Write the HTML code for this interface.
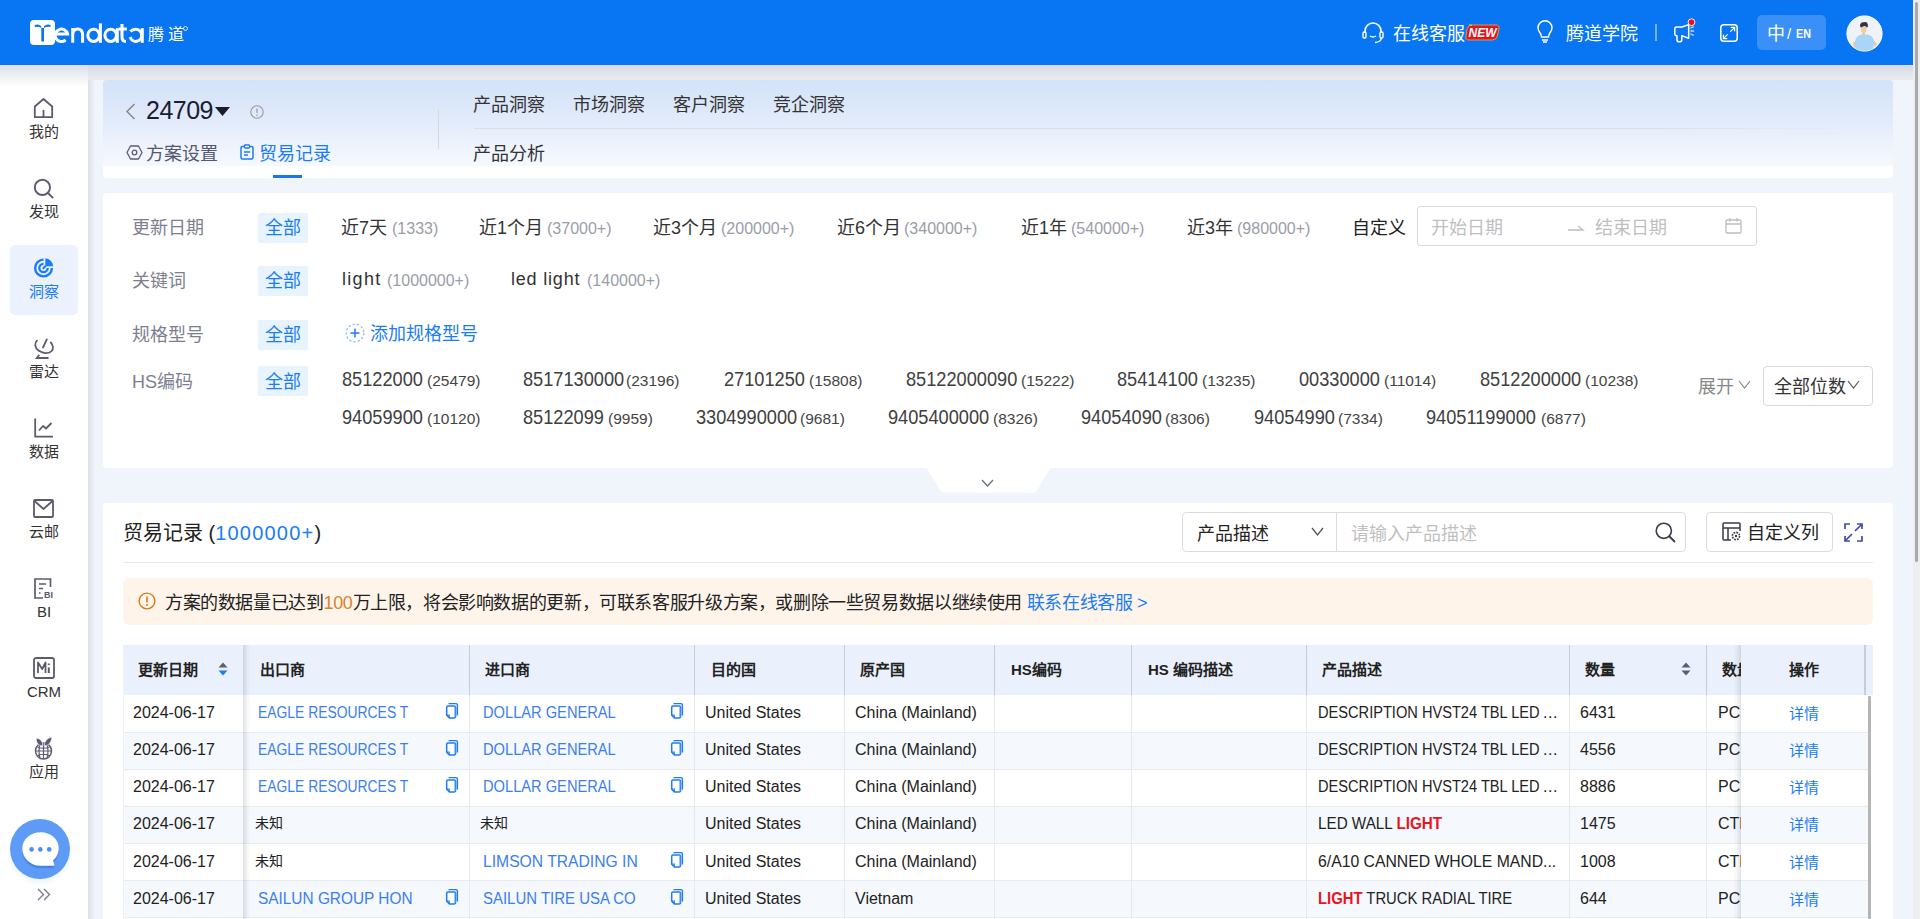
<!DOCTYPE html>
<html lang="zh-CN"><head><meta charset="utf-8">
<style>
*{margin:0;padding:0;box-sizing:border-box}
html,body{width:1920px;height:919px;overflow:hidden;background:#f0f4fb;font-family:"Liberation Sans",sans-serif;color:#333}
.a{position:absolute}
.t{position:absolute;white-space:nowrap;line-height:1}
.hdr{left:0;top:0;width:1913px;height:65px;background:#0876f2}
.sb{left:0;top:65px;width:88px;height:854px;background:#fff}
.card{position:absolute;background:#fff;border-radius:4px}
.w{color:#fff}
.sbl{font-size:15px;color:#333;width:88px;text-align:center;left:0}
svg{position:absolute;overflow:visible}
</style></head>
<body>
<!-- ===== HEADER ===== -->
<div class="a hdr"></div>
<!-- scrollbar -->
<div class="a" style="left:1913px;top:0;width:7px;height:919px;background:#eceef2"></div>
<div class="a" style="left:1915px;top:2px;width:3px;height:560px;background:#a9a9a9;border-radius:2px"></div>
<!-- logo -->
<div class="a" style="left:30px;top:20px;width:25px;height:25px;background:#fff;border-radius:4px"></div>
<svg style="left:30px;top:20px" width="25" height="25"><path d="M4.5 5.2 Q8.5 3.6 11.3 6.3 V21.5 H14 V6.3 Q16.8 3.6 20.8 5.2 L20.2 7 Q16.5 6.2 14 8 H11.3 Q8.8 6.2 5.1 7Z" fill="#0876f2"/></svg>
<svg style="left:0;top:0" width="200" height="60"><g fill="none" stroke="#fff" stroke-width="3">
<path d="M55.2 34 H67.6 A6.3 6.2 0 1 0 65.6 40"/>
<path d="M72.7 42.8 V28 M72.7 35 Q72.7 29 77.7 29 Q82.6 29 82.6 35 V42.8"/>
<ellipse cx="93.6" cy="35.3" rx="5.8" ry="6.1"/><path d="M100.4 23.4 V42.8"/>
<ellipse cx="110.7" cy="35.3" rx="5.8" ry="6.1"/><path d="M117.3 28.2 V42.8"/>
<path d="M122 24.1 V37 Q122 41.4 126 41.4"/><path d="M118.5 29 H126.8"/>
<path d="M130.4 31.5 Q132.5 29.2 135.8 29.2 A5.8 6.1 0 1 1 130.2 37"/><path d="M142.3 28.2 V42.8"/>
</g></svg>
<div class="t w" style="left:148px;top:27px;font-size:16px;letter-spacing:3.5px">腾道</div>
<div class="a" style="left:183px;top:26px;width:5px;height:5px;border:1px solid rgba(255,255,255,0.8);border-radius:50%"></div>

<!-- header right -->
<svg style="left:1362px;top:23px" width="22" height="20" viewBox="0 0 22 20"><path d="M3 10 V8 A8 8 0 0 1 19 8 V10" fill="none" stroke="#fff" stroke-width="1.6"/><rect x="1" y="9" width="3" height="6" rx="1.2" fill="none" stroke="#fff" stroke-width="1.4"/><rect x="18" y="9" width="3" height="6" rx="1.2" fill="none" stroke="#fff" stroke-width="1.4"/><path d="M8 13 Q11 15 14 13" fill="none" stroke="#fff" stroke-width="1.4"/><path d="M19.5 15 Q19 19 13 19.5" fill="none" stroke="#fff" stroke-width="1.4"/></svg>
<div class="t w" style="left:1393px;top:25px;font-size:18px">在线客服</div>
<svg style="left:1465px;top:24px" width="35" height="17" viewBox="0 0 35 17"><path d="M4 1 H31 Q35 1 34 5 L32 13 Q31 16 27 16 H4 Q0 16 1 12 L2 5 Q3 1 7 1Z" fill="#e3161c" stroke="#e8b04a" stroke-width="0.8"/><text x="17.5" y="13" font-family="Liberation Sans" font-size="12" font-weight="bold" font-style="italic" fill="#fff" text-anchor="middle">NEW</text></svg>
<svg style="left:1537px;top:23px" width="16" height="20" viewBox="0 0 16 20"><path d="M4.5 14 Q4.5 11.5 2.8 9.5 A7 7 0 1 1 13.2 9.5 Q11.5 11.5 11.5 14 Z" fill="none" stroke="#fff" stroke-width="1.5"/><path d="M5 17 H11 M6 19 H10" stroke="#fff" stroke-width="1.5"/></svg>
<div class="t w" style="left:1566px;top:25px;font-size:18px">腾道学院</div>
<div class="a" style="left:1655px;top:24px;width:2px;height:17px;background:rgba(255,255,255,0.45)"></div>
<svg style="left:1674px;top:18px" width="24" height="26" viewBox="0 0 24 26"><path d="M8 9 L14.7 6.6 V20.3 L8 17.7 H7.8 V22 Q7.8 23.8 5.4 23.8 Q3 23.8 3 22 V17.7 H2.6 Q0.8 17.7 0.8 15.5 V11.2 Q0.8 9 2.6 9 Z" fill="none" stroke="#fff" stroke-width="1.5" stroke-linejoin="round"/><path d="M16.8 10 L19.2 8.8 M17 13 H19.6 M16.8 16 L19.2 17.2" stroke="rgba(255,255,255,0.75)" stroke-width="1.3" stroke-linecap="round"/><circle cx="17.5" cy="4.2" r="3.4" fill="#e3101c" stroke="#fff" stroke-width="0.9"/></svg>
<svg style="left:1720px;top:24px" width="18" height="18" viewBox="0 0 18 18"><rect x="0.8" y="0.8" width="16.4" height="16.4" rx="3" fill="none" stroke="#fff" stroke-width="1.5"/><path d="M11.2 3.4 H14.6 V6.8 M14.4 3.6 L10.6 7.4 M3.4 11.2 V14.6 H6.8 M3.6 14.4 L7.4 10.6" fill="none" stroke="#fff" stroke-width="1.3" stroke-linecap="round"/></svg>
<div class="a" style="left:1757px;top:15px;width:69px;height:35px;background:#3a90f7;border-radius:5px"></div>
<div class="t w" style="left:1767px;top:25px;font-size:18px">中</div>
<div class="t w" style="left:1787px;top:26px;font-size:15px">/</div>
<div class="t w" style="left:1796px;top:28px;font-size:12.8px;font-weight:bold;transform:scaleX(0.84);transform-origin:0 0">EN</div>
<svg style="left:1846px;top:15px" width="37" height="37" viewBox="0 0 37 37"><defs><clipPath id="av"><circle cx="18.5" cy="18.5" r="17.3"/></clipPath></defs><circle cx="18.5" cy="18.5" r="17.6" fill="#eff2f9" stroke="#fff" stroke-width="1"/><g clip-path="url(#av)"><path d="M7.5 27 Q6.5 30 8 33 L10 32 L9.8 27Z M28.5 26 Q31 28 30.5 31 L28.5 31.5 L27.8 27Z" fill="#efc592"/><path d="M9.5 37 L9 26.5 Q10.5 20 15.5 19.5 H21.5 Q26.5 20 28.3 26.5 L26.5 37 Z" fill="#a9d6f6"/><rect x="16.3" y="16" width="2.6" height="4" fill="#efc592"/><ellipse cx="17.6" cy="14.2" rx="2.9" ry="3.4" fill="#f3cc9f"/><path d="M14 11 Q14 6.8 17.8 7.2 Q21.5 6.5 21.8 9.5 Q22.5 11.5 21 12.8 Q20 10.5 18 11 Q15.5 12 14.8 12.5Z" fill="#2f3446"/></g></svg>

<!-- ===== SIDEBAR ===== -->
<div class="a sb"></div>
<div class="a" style="left:88px;top:65px;width:7px;height:854px;background:linear-gradient(90deg,#dde1ea,#e8ebf1 60%,rgba(240,244,251,0))"></div>
<div class="a" style="left:10px;top:245px;width:68px;height:70px;background:#ebf1fd;border-radius:5px"></div>
<svg style="left:33px;top:97px" width="21" height="22" viewBox="0 0 21 22"><path d="M1.8 9.5 L10.5 2 L19.2 9.5 V20.2 H1.8 Z" fill="none" stroke="#5d5a70" stroke-width="1.8" stroke-linejoin="round"/><path d="M10.5 13 V20" stroke="#5d5a70" stroke-width="1.8"/></svg>
<div class="t sbl" style="top:124px">我的</div>
<svg style="left:33px;top:178px" width="22" height="22" viewBox="0 0 22 22"><circle cx="9.4" cy="9.4" r="7.6" fill="none" stroke="#5d5a70" stroke-width="1.9"/><path d="M15 15 L19.6 19.6" stroke="#5d5a70" stroke-width="1.9" stroke-linecap="round"/></svg>
<div class="t sbl" style="top:204px">发现</div>
<svg style="left:33px;top:257px" width="22" height="22" viewBox="0 0 22 22"><path d="M10.5 2.6 A8.4 8.4 0 1 0 18.9 11" fill="none" stroke="#1a7df5" stroke-width="2.4"/><path d="M10.5 6.8 A4.2 4.2 0 1 0 14.7 11" fill="none" stroke="#1a7df5" stroke-width="2.3"/><path d="M12.3 9.2 V1.3 A8.6 8.6 0 0 1 20.2 9.2 Z" fill="#1a7df5"/><path d="M9.8 11.7 L12.8 8.7" stroke="#1a7df5" stroke-width="2"/></svg>
<div class="t sbl" style="top:284px;color:#1a7df5">洞察</div>
<svg style="left:34px;top:337px" width="21" height="23" viewBox="0 0 21 23"><path d="M3 3.6 C0.2 6 0.6 10.8 4.5 13.6 C8.5 16.6 14 16.9 17.3 14.4 C19.8 12.4 19.3 8.2 16.8 5.4" fill="none" stroke="#5d5a70" stroke-width="1.8" stroke-linecap="round"/><path d="M9 10.5 L12.8 2.4" fill="none" stroke="#5d5a70" stroke-width="1.8" stroke-linecap="round"/><path d="M5.3 17.8 L2.8 21 H14.6" fill="none" stroke="#5d5a70" stroke-width="1.8"/></svg>
<div class="t sbl" style="top:364px">雷达</div>
<svg style="left:34px;top:418px" width="20" height="20" viewBox="0 0 20 20"><path d="M1.2 0.5 V18.6 H19" fill="none" stroke="#5d5a70" stroke-width="1.8"/><path d="M5 12.5 L9 8 L12 10.5 L17.5 5" fill="none" stroke="#5d5a70" stroke-width="1.8" stroke-linejoin="round"/></svg>
<div class="t sbl" style="top:444px">数据</div>
<svg style="left:33px;top:499px" width="21" height="19" viewBox="0 0 21 19"><rect x="1" y="1" width="19" height="17" rx="1" fill="none" stroke="#5d5a70" stroke-width="1.8"/><path d="M1.5 2 L10.5 10 L19.5 2" fill="none" stroke="#5d5a70" stroke-width="1.8"/></svg>
<div class="t sbl" style="top:524px">云邮</div>
<svg style="left:34px;top:578px" width="22" height="21" viewBox="0 0 22 21"><path d="M9 20 H1 V1 H16.5 V9" fill="none" stroke="#5d5a70" stroke-width="1.7"/><path d="M5 6 H12 M5 10.5 H9 M5 15 H6.5" stroke="#5d5a70" stroke-width="1.7"/><text x="10" y="20" font-family="Liberation Sans" font-size="9" font-weight="bold" fill="#5d5a70">BI</text></svg>
<div class="t sbl" style="top:604px">BI</div>
<svg style="left:33px;top:657px" width="22" height="22" viewBox="0 0 22 22"><rect x="1" y="1" width="20" height="20" rx="2" fill="none" stroke="#5d5a70" stroke-width="1.8"/><path d="M5 16 V5.5 L9.2 12 L12.5 5.5 V16" fill="none" stroke="#5d5a70" stroke-width="1.8" stroke-linejoin="round"/><path d="M15.8 10.5 V16 M15.8 6.5 V8" stroke="#5d5a70" stroke-width="2"/></svg>
<div class="t sbl" style="top:684px">CRM</div>
<svg style="left:32px;top:736px" width="23" height="24" viewBox="0 0 23 24"><circle cx="11.5" cy="15" r="8" fill="none" stroke="#5d5a70" stroke-width="1.5"/><path d="M3.5 15 H19.5 M11.5 8 V23 M5.5 11 Q11.5 13.5 17.5 11 M5.5 19.5 Q11.5 17 17.5 19.5 M8 8.5 Q6 15 8 22 M15 8.5 Q17 15 15 22" fill="none" stroke="#5d5a70" stroke-width="1.2"/><path d="M10.8 10 Q4 9.5 4.2 2 Q11 3 10.8 10Z M12.2 10 Q19 9.5 20 1 Q12.5 2.5 12.2 10Z" fill="#5d5a70" stroke="#fff" stroke-width="0.6"/></svg>
<div class="t sbl" style="top:764px">应用</div>
<div class="a" style="left:10px;top:819px;width:60px;height:60px;border-radius:50%;background:#5e9bf7;box-shadow:0 4px 5px rgba(94,155,247,0.10)"></div>
<svg style="left:20px;top:830px" width="42" height="42" viewBox="0 0 42 42"><path d="M20.5 4.8 C30.5 4.8 38.7 11.5 38.7 20.5 C38.7 26 36.5 30 33 33 L34.2 37.1 Q34.5 38.3 33 38.3 H20.5 C10.5 38.3 2.3 30.5 2.3 21 C2.3 12 10.5 4.8 20.5 4.8 Z" fill="#4386e8"/><path d="M20.5 2.3 C30.5 2.3 38.7 9 38.7 18 C38.7 23.5 36.5 27.5 33 30.5 L34.2 34.6 Q34.5 35.8 33 35.8 H20.5 C10.5 35.8 2.3 28 2.3 18.5 C2.3 9.5 10.5 2.3 20.5 2.3 Z" fill="#fff"/><circle cx="11.6" cy="19.4" r="2.3" fill="#4a8ff5"/><circle cx="20.3" cy="19.4" r="2.3" fill="#4a8ff5"/><circle cx="29.2" cy="19.4" r="2.3" fill="#4a8ff5"/></svg>
<svg style="left:37px;top:888px" width="14" height="13" viewBox="0 0 14 13"><path d="M1 1 L6.5 6.5 L1 12 M7 1 L12.5 6.5 L7 12" fill="none" stroke="#7b7d8e" stroke-width="1.4"/></svg>

<div class="a" style="left:88px;top:65px;width:1825px;height:15px;background:linear-gradient(#d7dbe4,#e9ebf0)"></div>
<div class="a" style="left:0;top:65px;width:88px;height:22px;background:linear-gradient(#dde1e9,rgba(255,255,255,0))"></div>
<!-- ===== TOP CARD ===== -->
<div class="card" style="left:103px;top:80px;width:1790px;height:98px;background:linear-gradient(180deg,#d3e3f9 0%,#dde8fa 30%,#e8effc 55%,#f0f4fd 72%,#f5f8fe 87%,#fff 88%,#fff 100%)"></div>
<svg style="left:125px;top:103px" width="11" height="17" viewBox="0 0 11 17"><path d="M9.5 1 L2 8.5 L9.5 16" fill="none" stroke="#888" stroke-width="1.5"/></svg>
<div class="t" style="left:146px;top:98px;font-size:25px;letter-spacing:-0.5px;color:#1c1c2e">24709</div>
<svg style="left:215px;top:107px" width="15" height="9" viewBox="0 0 15 9"><path d="M0 0 H15 L7.5 9Z" fill="#1c1c2e"/></svg>
<svg style="left:250px;top:105px" width="14" height="14" viewBox="0 0 14 14"><circle cx="7" cy="7" r="6.2" fill="none" stroke="#999" stroke-width="1.1"/><path d="M7 3.5 V8" stroke="#999" stroke-width="1.2"/><circle cx="7" cy="10.2" r="0.8" fill="#999"/></svg>
<svg style="left:126px;top:145px" width="17" height="15" viewBox="0 0 17 15"><path d="M4.5 1 H12.5 L16 7.5 L12.5 14 H4.5 L1 7.5Z" fill="none" stroke="#5a5d78" stroke-width="1.3" stroke-linejoin="round"/><circle cx="8.5" cy="7.5" r="2.3" fill="none" stroke="#5a5d78" stroke-width="1.3"/></svg>
<div class="t" style="left:146px;top:145px;font-size:18px;color:#555870">方案设置</div>
<svg style="left:240px;top:144px" width="14" height="16" viewBox="0 0 14 16"><rect x="1" y="2.5" width="12" height="12.5" rx="1.5" fill="none" stroke="#1a7df5" stroke-width="1.5"/><rect x="4.5" y="1" width="5" height="3" rx="0.8" fill="#fff" stroke="#1a7df5" stroke-width="1.3"/><path d="M4 8 H10 M4 11 H8" stroke="#1a7df5" stroke-width="1.4"/></svg>
<div class="t" style="left:259px;top:145px;font-size:18px;color:#1a7df5">贸易记录</div>
<div class="a" style="left:273px;top:175px;width:29px;height:3px;background:#1a73f0"></div>
<div class="a" style="left:438px;top:109px;width:1px;height:40px;background:#d4d8e2"></div>
<div class="t" style="left:473px;top:96px;font-size:18px;color:#333">产品洞察</div>
<div class="t" style="left:573px;top:96px;font-size:18px;color:#333">市场洞察</div>
<div class="t" style="left:673px;top:96px;font-size:18px;color:#333">客户洞察</div>
<div class="t" style="left:773px;top:96px;font-size:18px;color:#333">竞企洞察</div>
<div class="a" style="left:474px;top:128px;width:1390px;height:1px;background:linear-gradient(90deg,#dcdfe8 85%,rgba(220,223,232,0))"></div>
<div class="t" style="left:473px;top:145px;font-size:18px;color:#333">产品分析</div>

<!-- ===== FILTER CARD ===== -->
<div class="card" style="left:103px;top:193px;width:1790px;height:275px"></div>
<svg style="left:926px;top:467px" width="125" height="27" viewBox="0 0 125 27"><path d="M0 0 H125 L111 23 Q109 26 105 26 H20 Q16 26 14 23Z" fill="#fff"/></svg>
<svg style="left:981px;top:479px" width="13" height="8" viewBox="0 0 13 8"><path d="M1 1 L6.5 7 L12 1" fill="none" stroke="#6b6d80" stroke-width="1.3"/></svg>
<style>
.fl{font-size:18px;color:#7d7f90}
.allb{position:absolute;left:258px;width:50px;height:30px;background:#e8f4fd;border-radius:2px}
.allt{font-size:18px;color:#1a7df5}
.op{font-size:18px;color:#333}
.cn{font-size:16px;color:#9a9cab}
.hs{font-size:18.2px;color:#404040;transform:scaleY(1.08);transform-origin:0 0}
.hc{font-size:15.5px;color:#444}
</style>
<!-- row1 -->
<div class="t fl" style="left:132px;top:219px">更新日期</div>
<div class="allb" style="top:213px"></div><div class="t allt" style="left:265px;top:219px">全部</div>
<div class="t op" style="left:341px;top:219px">近7天</div><div class="t cn" style="left:392px;top:221px">(1333)</div>
<div class="t op" style="left:479px;top:219px">近1个月</div><div class="t cn" style="left:547px;top:221px">(37000+)</div>
<div class="t op" style="left:653px;top:219px">近3个月</div><div class="t cn" style="left:721px;top:221px">(200000+)</div>
<div class="t op" style="left:837px;top:219px">近6个月</div><div class="t cn" style="left:904px;top:221px">(340000+)</div>
<div class="t op" style="left:1021px;top:219px">近1年</div><div class="t cn" style="left:1071px;top:221px">(540000+)</div>
<div class="t op" style="left:1187px;top:219px">近3年</div><div class="t cn" style="left:1237px;top:221px">(980000+)</div>
<div class="t op" style="left:1352px;top:219px;color:#222">自定义</div>
<div class="a" style="left:1417px;top:206px;width:340px;height:40px;border:1px solid #d9d9d9;border-radius:3px;background:#fff"></div>
<div class="t" style="left:1431px;top:219px;font-size:18px;color:#bfbfbf">开始日期</div>
<svg style="left:1568px;top:224px" width="16" height="7" viewBox="0 0 16 7"><path d="M0 6 H15 L10 2" fill="none" stroke="#bfbfbf" stroke-width="1.3"/></svg>
<div class="t" style="left:1595px;top:219px;font-size:18px;color:#bfbfbf">结束日期</div>
<svg style="left:1725px;top:217px" width="17" height="17" viewBox="0 0 17 17"><rect x="1" y="3" width="15" height="13" rx="1" fill="none" stroke="#bfbfbf" stroke-width="1.3"/><path d="M1 7 H16 M5 1 V4.5 M12 1 V4.5" stroke="#bfbfbf" stroke-width="1.3"/></svg>
<!-- row2 -->
<div class="t fl" style="left:132px;top:272px">关键词</div>
<div class="allb" style="top:266px"></div><div class="t allt" style="left:265px;top:272px">全部</div>
<div class="t op" style="left:342px;top:270px;letter-spacing:1.3px">light</div><div class="t cn" style="left:387px;top:273px">(1000000+)</div>
<div class="t op" style="left:511px;top:270px;letter-spacing:0.8px">led light</div><div class="t cn" style="left:587px;top:273px">(140000+)</div>
<!-- row3 -->
<div class="t fl" style="left:132px;top:326px">规格型号</div>
<div class="allb" style="top:320px"></div><div class="t allt" style="left:265px;top:326px">全部</div>
<svg style="left:345px;top:323px" width="20" height="20" viewBox="0 0 20 20"><circle cx="10" cy="10" r="8.8" fill="none" stroke="#8fbdf7" stroke-width="1.2" stroke-dasharray="2.5 1.8"/><path d="M10 5.5 V14.5 M5.5 10 H14.5" stroke="#1a7df5" stroke-width="1.5"/></svg>
<div class="t" style="left:370px;top:325px;font-size:18px;color:#1a7df5">添加规格型号</div>
<!-- row4 HS -->
<div class="t fl" style="left:132px;top:373px">HS编码</div>
<div class="allb" style="top:366px"></div><div class="t allt" style="left:265px;top:373px">全部</div>
<div class="t hs" style="left:342px;top:370px">85122000</div><div class="t hc" style="left:427px;top:372.5px">(25479)</div>
<div class="t hs" style="left:523px;top:370px">8517130000</div><div class="t hc" style="left:626px;top:372.5px">(23196)</div>
<div class="t hs" style="left:724px;top:370px">27101250</div><div class="t hc" style="left:809px;top:372.5px">(15808)</div>
<div class="t hs" style="left:906px;top:370px">85122000090</div><div class="t hc" style="left:1021px;top:372.5px">(15222)</div>
<div class="t hs" style="left:1117px;top:370px">85414100</div><div class="t hc" style="left:1202px;top:372.5px">(13235)</div>
<div class="t hs" style="left:1299px;top:370px">00330000</div><div class="t hc" style="left:1384px;top:372.5px">(11014)</div>
<div class="t hs" style="left:1480px;top:370px">8512200000</div><div class="t hc" style="left:1585px;top:372.5px">(10238)</div>
<div class="t hs" style="left:342px;top:408px">94059900</div><div class="t hc" style="left:427px;top:410.5px">(10120)</div>
<div class="t hs" style="left:523px;top:408px">85122099</div><div class="t hc" style="left:608px;top:410.5px">(9959)</div>
<div class="t hs" style="left:696px;top:408px">3304990000</div><div class="t hc" style="left:800px;top:410.5px">(9681)</div>
<div class="t hs" style="left:888px;top:408px">9405400000</div><div class="t hc" style="left:993px;top:410.5px">(8326)</div>
<div class="t hs" style="left:1081px;top:408px">94054090</div><div class="t hc" style="left:1165px;top:410.5px">(8306)</div>
<div class="t hs" style="left:1254px;top:408px">94054990</div><div class="t hc" style="left:1338px;top:410.5px">(7334)</div>
<div class="t hs" style="left:1426px;top:408px">94051199000</div><div class="t hc" style="left:1541px;top:410.5px">(6877)</div>
<div class="t" style="left:1698px;top:378px;font-size:18px;color:#888">展开</div>
<svg style="left:1738px;top:380px" width="13" height="9" viewBox="0 0 13 9"><path d="M1 1 L6.5 8 L12 1" fill="none" stroke="#888" stroke-width="1.2"/></svg>
<div class="a" style="left:1763px;top:366px;width:110px;height:40px;border:1px solid #d9d9d9;border-radius:4px"></div>
<div class="t" style="left:1774px;top:378px;font-size:18px;color:#333">全部位数</div>
<svg style="left:1847px;top:380px" width="13" height="9" viewBox="0 0 13 9"><path d="M1 1 L6.5 8 L12 1" fill="none" stroke="#555" stroke-width="1.2"/></svg>
<!-- ===== RECORDS CARD ===== -->
<style>
.th{font-size:15px;font-weight:bold;color:#222}
.td{font-size:16px;color:#222}
.lk{font-size:16px;color:#3b7ef2}
.rl{position:absolute;left:123px;width:1750px;height:1px;background:#e8ebf0}
.cl{position:absolute;width:1px;background:#e6e9ef}
.hl{position:absolute;width:1px;top:645px;height:50px;background:#c9cdd6}
</style>
<div class="card" style="left:103px;top:503px;width:1790px;height:430px"></div>
<div class="t" style="left:123px;top:523px;font-size:20px;color:#222">贸易记录 (<span style="color:#1a7df5;letter-spacing:1.2px">1000000+</span>)</div>
<!-- search -->
<div class="a" style="left:1182px;top:512px;width:504px;height:40px;border:1px solid #d9dce3;border-radius:4px"></div>
<div class="a" style="left:1336px;top:513px;width:1px;height:38px;background:#d9dce3"></div>
<div class="t" style="left:1197px;top:525px;font-size:18px;color:#222">产品描述</div>
<svg style="left:1311px;top:527px" width="13" height="9" viewBox="0 0 13 9"><path d="M1 1 L6.5 8 L12 1" fill="none" stroke="#555" stroke-width="1.3"/></svg>
<div class="t" style="left:1351px;top:525px;font-size:18px;color:#bfbfbf">请输入产品描述</div>
<svg style="left:1655px;top:522px" width="21" height="21" viewBox="0 0 21 21"><circle cx="8.8" cy="8.8" r="7.6" fill="none" stroke="#3a3a4a" stroke-width="1.6"/><path d="M14.5 14.5 L19.5 19.5" stroke="#3a3a4a" stroke-width="1.8" stroke-linecap="round"/></svg>
<div class="a" style="left:1706px;top:512px;width:127px;height:40px;border:1px solid #d9dce5;border-radius:4px"></div>
<svg style="left:1722px;top:522px" width="20" height="20" viewBox="0 0 20 20"><path d="M9 18 H2 Q1 18 1 17 V2 Q1 1 2 1 H17 Q18 1 18 2 V9" fill="none" stroke="#3a3a4a" stroke-width="1.5"/><path d="M1 6 H18 M6 6 V18" stroke="#3a3a4a" stroke-width="1.5"/><circle cx="14" cy="14" r="3.6" fill="none" stroke="#3a3a4a" stroke-width="1.6" stroke-dasharray="1.8 1"/><circle cx="14" cy="14" r="1.2" fill="#3a3a4a"/></svg>
<div class="t" style="left:1747px;top:524px;font-size:18px;color:#222">自定义列</div>
<svg style="left:1844px;top:523px" width="19" height="19" viewBox="0 0 19 19"><path d="M1 6 V1 H6 M13 1 H18 V6 M18 13 V18 H13 M6 18 H1 V13 M11 8 L17 2 M8 11 L2 17" fill="none" stroke="#3d4f9e" stroke-width="1.7"/></svg>
<div class="a" style="left:123px;top:562px;width:1750px;height:1px;background:#e8e8e8"></div>
<!-- banner -->
<div class="a" style="left:123px;top:578px;width:1750px;height:47px;background:#fff4ea;border-radius:6px"></div>
<svg style="left:138px;top:592px" width="18" height="18" viewBox="0 0 18 18"><circle cx="9" cy="9" r="7.9" fill="none" stroke="#d87a16" stroke-width="1.4"/><path d="M9 4.5 V10.5" stroke="#d87a16" stroke-width="1.6"/><circle cx="9" cy="13" r="1" fill="#d87a16"/></svg>
<div class="t" style="left:165px;top:594px;font-size:18px;letter-spacing:-0.38px;color:#222">方案的数据量已达到<span style="color:#d9822b">100</span>万上限，将会影响数据的更新，可联系客服升级方案，或删除一些贸易数据以继续使用 <span style="color:#1a7df5">联系在线客服 &gt;</span></div>

<!-- TABLE -->
<div class="a" style="left:123px;top:645px;width:1750px;height:50.4px;background:#eaf1fc"></div>
<div class="a" style="left:123px;top:695.40px;width:1745px;height:37.16px;background:#fff"></div>
<div class="rl" style="top:731.56px;width:1745px"></div>
<div class="a" style="left:123px;top:732.56px;width:1745px;height:37.16px;background:#f5f8fd"></div>
<div class="rl" style="top:768.72px;width:1745px"></div>
<div class="a" style="left:123px;top:769.72px;width:1745px;height:37.16px;background:#fff"></div>
<div class="rl" style="top:805.88px;width:1745px"></div>
<div class="a" style="left:123px;top:806.88px;width:1745px;height:37.16px;background:#f5f8fd"></div>
<div class="rl" style="top:843.04px;width:1745px"></div>
<div class="a" style="left:123px;top:844.04px;width:1745px;height:37.16px;background:#fff"></div>
<div class="rl" style="top:880.20px;width:1745px"></div>
<div class="a" style="left:123px;top:881.20px;width:1745px;height:37.16px;background:#f5f8fd"></div>
<div class="rl" style="top:917.36px;width:1745px"></div>
<div class="cl" style="left:469px;top:694px;height:225px"></div>
<div class="hl" style="left:469px"></div>
<div class="cl" style="left:694px;top:694px;height:225px"></div>
<div class="hl" style="left:694px"></div>
<div class="cl" style="left:844px;top:694px;height:225px"></div>
<div class="hl" style="left:844px"></div>
<div class="cl" style="left:994px;top:694px;height:225px"></div>
<div class="hl" style="left:994px"></div>
<div class="cl" style="left:1131px;top:694px;height:225px"></div>
<div class="hl" style="left:1131px"></div>
<div class="cl" style="left:1306px;top:694px;height:225px"></div>
<div class="hl" style="left:1306px"></div>
<div class="cl" style="left:1569px;top:694px;height:225px"></div>
<div class="hl" style="left:1569px"></div>
<div class="cl" style="left:1706px;top:694px;height:225px"></div>
<div class="hl" style="left:1706px"></div>
<div class="cl" style="left:123px;top:694px;height:225px;background:#eef0f4"></div>
<div class="t th" style="left:138px;top:662px">更新日期</div>
<div class="t th" style="left:260px;top:662px">出口商</div>
<div class="t th" style="left:485px;top:662px">进口商</div>
<div class="t th" style="left:711px;top:662px">目的国</div>
<div class="t th" style="left:860px;top:662px">原产国</div>
<div class="t th" style="left:1011px;top:662px">HS编码</div>
<div class="t th" style="left:1148px;top:662px">HS 编码描述</div>
<div class="t th" style="left:1322px;top:662px">产品描述</div>
<div class="t th" style="left:1585px;top:662px">数量</div>
<div class="t th" style="left:1722px;top:662px">数量单位</div>
<svg style="left:218px;top:662px" width="10" height="15" viewBox="0 0 10 15"><path d="M0.5 5.5 L5 0.5 L9.5 5.5Z" fill="#5a5d73"/><path d="M0.5 8.5 L5 13.5 L9.5 8.5Z" fill="#1a7df5"/></svg>
<svg style="left:1681px;top:662px" width="10" height="15" viewBox="0 0 10 15"><path d="M0.5 5.5 L5 0.5 L9.5 5.5Z" fill="#5a5d73"/><path d="M0.5 8.5 L5 13.5 L9.5 8.5Z" fill="#5a5d73"/></svg>
<div class="t td" style="left:133px;top:705.00px">2024-06-17</div>
<div class="t lk" style="left:258px;top:705.00px;transform:scaleX(0.868);transform-origin:0 0">EAGLE RESOURCES T</div>
<svg style="left:445px;top:702px" width="14" height="17" viewBox="0 0 14 17"><path d="M3.6 1.6 H11 Q12.4 1.6 12.4 3 V13.4" fill="none" stroke="#1d7cf4" stroke-width="1.4"/><path d="M1.7 5.2 Q1.7 3.9 3 3.9 H9.3 Q10.6 3.9 10.6 5.2 V14.6 Q10.6 15.9 9.3 15.9 H4.4 L1.7 13.2 Z" fill="#fff" stroke="#1d7cf4" stroke-width="1.5" stroke-linejoin="round"/><path d="M9.8 4.5 V15" stroke="#7fb3f8" stroke-width="1"/><path d="M1.8 13 H4.2 V15.6" fill="none" stroke="#1d7cf4" stroke-width="1.2"/></svg>
<div class="t lk" style="left:483px;top:705.00px;transform:scaleX(0.916);transform-origin:0 0">DOLLAR GENERAL</div>
<svg style="left:670px;top:702px" width="14" height="17" viewBox="0 0 14 17"><path d="M3.6 1.6 H11 Q12.4 1.6 12.4 3 V13.4" fill="none" stroke="#1d7cf4" stroke-width="1.4"/><path d="M1.7 5.2 Q1.7 3.9 3 3.9 H9.3 Q10.6 3.9 10.6 5.2 V14.6 Q10.6 15.9 9.3 15.9 H4.4 L1.7 13.2 Z" fill="#fff" stroke="#1d7cf4" stroke-width="1.5" stroke-linejoin="round"/><path d="M9.8 4.5 V15" stroke="#7fb3f8" stroke-width="1"/><path d="M1.8 13 H4.2 V15.6" fill="none" stroke="#1d7cf4" stroke-width="1.2"/></svg>
<div class="t td" style="left:705px;top:705.00px">United States</div>
<div class="t td" style="left:855px;top:705.00px">China (Mainland)</div>
<div class="t td" style="left:1318px;top:705.00px;transform:scaleX(0.913);transform-origin:0 0">DESCRIPTION HVST24 TBL LED</div>
<div class="t td" style="left:1543px;top:705.00px;letter-spacing:0.6px">...</div>
<div class="t td" style="left:1580px;top:705.00px">6431</div>
<div class="t td" style="left:1718px;top:705.00px">PCS</div>
<div class="t td" style="left:133px;top:742.16px">2024-06-17</div>
<div class="t lk" style="left:258px;top:742.16px;transform:scaleX(0.868);transform-origin:0 0">EAGLE RESOURCES T</div>
<svg style="left:445px;top:739px" width="14" height="17" viewBox="0 0 14 17"><path d="M3.6 1.6 H11 Q12.4 1.6 12.4 3 V13.4" fill="none" stroke="#1d7cf4" stroke-width="1.4"/><path d="M1.7 5.2 Q1.7 3.9 3 3.9 H9.3 Q10.6 3.9 10.6 5.2 V14.6 Q10.6 15.9 9.3 15.9 H4.4 L1.7 13.2 Z" fill="#fff" stroke="#1d7cf4" stroke-width="1.5" stroke-linejoin="round"/><path d="M9.8 4.5 V15" stroke="#7fb3f8" stroke-width="1"/><path d="M1.8 13 H4.2 V15.6" fill="none" stroke="#1d7cf4" stroke-width="1.2"/></svg>
<div class="t lk" style="left:483px;top:742.16px;transform:scaleX(0.916);transform-origin:0 0">DOLLAR GENERAL</div>
<svg style="left:670px;top:739px" width="14" height="17" viewBox="0 0 14 17"><path d="M3.6 1.6 H11 Q12.4 1.6 12.4 3 V13.4" fill="none" stroke="#1d7cf4" stroke-width="1.4"/><path d="M1.7 5.2 Q1.7 3.9 3 3.9 H9.3 Q10.6 3.9 10.6 5.2 V14.6 Q10.6 15.9 9.3 15.9 H4.4 L1.7 13.2 Z" fill="#fff" stroke="#1d7cf4" stroke-width="1.5" stroke-linejoin="round"/><path d="M9.8 4.5 V15" stroke="#7fb3f8" stroke-width="1"/><path d="M1.8 13 H4.2 V15.6" fill="none" stroke="#1d7cf4" stroke-width="1.2"/></svg>
<div class="t td" style="left:705px;top:742.16px">United States</div>
<div class="t td" style="left:855px;top:742.16px">China (Mainland)</div>
<div class="t td" style="left:1318px;top:742.16px;transform:scaleX(0.913);transform-origin:0 0">DESCRIPTION HVST24 TBL LED</div>
<div class="t td" style="left:1543px;top:742.16px;letter-spacing:0.6px">...</div>
<div class="t td" style="left:1580px;top:742.16px">4556</div>
<div class="t td" style="left:1718px;top:742.16px">PCS</div>
<div class="t td" style="left:133px;top:779.32px">2024-06-17</div>
<div class="t lk" style="left:258px;top:779.32px;transform:scaleX(0.868);transform-origin:0 0">EAGLE RESOURCES T</div>
<svg style="left:445px;top:776px" width="14" height="17" viewBox="0 0 14 17"><path d="M3.6 1.6 H11 Q12.4 1.6 12.4 3 V13.4" fill="none" stroke="#1d7cf4" stroke-width="1.4"/><path d="M1.7 5.2 Q1.7 3.9 3 3.9 H9.3 Q10.6 3.9 10.6 5.2 V14.6 Q10.6 15.9 9.3 15.9 H4.4 L1.7 13.2 Z" fill="#fff" stroke="#1d7cf4" stroke-width="1.5" stroke-linejoin="round"/><path d="M9.8 4.5 V15" stroke="#7fb3f8" stroke-width="1"/><path d="M1.8 13 H4.2 V15.6" fill="none" stroke="#1d7cf4" stroke-width="1.2"/></svg>
<div class="t lk" style="left:483px;top:779.32px;transform:scaleX(0.916);transform-origin:0 0">DOLLAR GENERAL</div>
<svg style="left:670px;top:776px" width="14" height="17" viewBox="0 0 14 17"><path d="M3.6 1.6 H11 Q12.4 1.6 12.4 3 V13.4" fill="none" stroke="#1d7cf4" stroke-width="1.4"/><path d="M1.7 5.2 Q1.7 3.9 3 3.9 H9.3 Q10.6 3.9 10.6 5.2 V14.6 Q10.6 15.9 9.3 15.9 H4.4 L1.7 13.2 Z" fill="#fff" stroke="#1d7cf4" stroke-width="1.5" stroke-linejoin="round"/><path d="M9.8 4.5 V15" stroke="#7fb3f8" stroke-width="1"/><path d="M1.8 13 H4.2 V15.6" fill="none" stroke="#1d7cf4" stroke-width="1.2"/></svg>
<div class="t td" style="left:705px;top:779.32px">United States</div>
<div class="t td" style="left:855px;top:779.32px">China (Mainland)</div>
<div class="t td" style="left:1318px;top:779.32px;transform:scaleX(0.913);transform-origin:0 0">DESCRIPTION HVST24 TBL LED</div>
<div class="t td" style="left:1543px;top:779.32px;letter-spacing:0.6px">...</div>
<div class="t td" style="left:1580px;top:779.32px">8886</div>
<div class="t td" style="left:1718px;top:779.32px">PCS</div>
<div class="t td" style="left:133px;top:816.48px">2024-06-17</div>
<div class="t td" style="left:255px;top:816.48px;font-size:14px">未知</div>
<div class="t td" style="left:480px;top:816.48px;font-size:14px">未知</div>
<div class="t td" style="left:705px;top:816.48px">United States</div>
<div class="t td" style="left:855px;top:816.48px">China (Mainland)</div>
<div class="t td" style="left:1318px;top:816.48px;transform:scaleX(0.952);transform-origin:0 0">LED WALL <b style="color:#e8141e">LIGHT</b></div>
<div class="t td" style="left:1580px;top:816.48px">1475</div>
<div class="t td" style="left:1718px;top:816.48px">CTN</div>
<div class="t td" style="left:133px;top:853.64px">2024-06-17</div>
<div class="t td" style="left:255px;top:853.64px;font-size:14px">未知</div>
<div class="t lk" style="left:483px;top:853.64px;transform:scaleX(0.98);transform-origin:0 0">LIMSON TRADING IN</div>
<svg style="left:670px;top:851px" width="14" height="17" viewBox="0 0 14 17"><path d="M3.6 1.6 H11 Q12.4 1.6 12.4 3 V13.4" fill="none" stroke="#1d7cf4" stroke-width="1.4"/><path d="M1.7 5.2 Q1.7 3.9 3 3.9 H9.3 Q10.6 3.9 10.6 5.2 V14.6 Q10.6 15.9 9.3 15.9 H4.4 L1.7 13.2 Z" fill="#fff" stroke="#1d7cf4" stroke-width="1.5" stroke-linejoin="round"/><path d="M9.8 4.5 V15" stroke="#7fb3f8" stroke-width="1"/><path d="M1.8 13 H4.2 V15.6" fill="none" stroke="#1d7cf4" stroke-width="1.2"/></svg>
<div class="t td" style="left:705px;top:853.64px">United States</div>
<div class="t td" style="left:855px;top:853.64px">China (Mainland)</div>
<div class="t td" style="left:1318px;top:853.64px;transform:scaleX(0.985);transform-origin:0 0">6/A10 CANNED WHOLE MAND...</div>
<div class="t td" style="left:1580px;top:853.64px">1008</div>
<div class="t td" style="left:1718px;top:853.64px">CTN</div>
<div class="t td" style="left:133px;top:890.80px">2024-06-17</div>
<div class="t lk" style="left:258px;top:890.80px;transform:scaleX(0.962);transform-origin:0 0">SAILUN GROUP HON</div>
<svg style="left:445px;top:888px" width="14" height="17" viewBox="0 0 14 17"><path d="M3.6 1.6 H11 Q12.4 1.6 12.4 3 V13.4" fill="none" stroke="#1d7cf4" stroke-width="1.4"/><path d="M1.7 5.2 Q1.7 3.9 3 3.9 H9.3 Q10.6 3.9 10.6 5.2 V14.6 Q10.6 15.9 9.3 15.9 H4.4 L1.7 13.2 Z" fill="#fff" stroke="#1d7cf4" stroke-width="1.5" stroke-linejoin="round"/><path d="M9.8 4.5 V15" stroke="#7fb3f8" stroke-width="1"/><path d="M1.8 13 H4.2 V15.6" fill="none" stroke="#1d7cf4" stroke-width="1.2"/></svg>
<div class="t lk" style="left:483px;top:890.80px;transform:scaleX(0.935);transform-origin:0 0">SAILUN TIRE USA CO</div>
<svg style="left:670px;top:888px" width="14" height="17" viewBox="0 0 14 17"><path d="M3.6 1.6 H11 Q12.4 1.6 12.4 3 V13.4" fill="none" stroke="#1d7cf4" stroke-width="1.4"/><path d="M1.7 5.2 Q1.7 3.9 3 3.9 H9.3 Q10.6 3.9 10.6 5.2 V14.6 Q10.6 15.9 9.3 15.9 H4.4 L1.7 13.2 Z" fill="#fff" stroke="#1d7cf4" stroke-width="1.5" stroke-linejoin="round"/><path d="M9.8 4.5 V15" stroke="#7fb3f8" stroke-width="1"/><path d="M1.8 13 H4.2 V15.6" fill="none" stroke="#1d7cf4" stroke-width="1.2"/></svg>
<div class="t td" style="left:705px;top:890.80px">United States</div>
<div class="t td" style="left:855px;top:890.80px">Vietnam</div>
<div class="t td" style="left:1318px;top:890.80px;transform:scaleX(0.927);transform-origin:0 0"><b style="color:#e8141e">LIGHT</b> TRUCK RADIAL TIRE</div>
<div class="t td" style="left:1580px;top:890.80px">644</div>
<div class="t td" style="left:1718px;top:890.80px">PCS</div>
<div class="a" style="left:243px;top:645px;width:7px;height:274px;background:linear-gradient(90deg,rgba(0,20,60,0.13),rgba(0,20,60,0.05) 50%,rgba(0,20,60,0))"></div>
<div class="a" style="left:1733px;top:645px;width:8px;height:274px;background:linear-gradient(270deg,rgba(0,20,60,0.12),rgba(0,20,60,0.04) 50%,rgba(0,20,60,0))"></div>
<div class="a" style="left:1741px;top:645px;width:132px;height:50.4px;background:#eaf1fc"></div>
<div class="t th" style="left:1789px;top:662px">操作</div>
<div class="a" style="left:1864px;top:645px;width:2px;height:50px;background:#c9cdd6"></div>
<div class="a" style="left:1741px;top:695.40px;width:127px;height:37.16px;background:#fff"></div>
<div class="a" style="left:1741px;top:731.56px;width:127px;height:1px;background:#e8ebf0"></div>
<div class="t" style="left:1789px;top:706.00px;font-size:15px;color:#1a7df5">详情</div>
<div class="a" style="left:1741px;top:732.56px;width:127px;height:37.16px;background:#f5f8fd"></div>
<div class="a" style="left:1741px;top:768.72px;width:127px;height:1px;background:#e8ebf0"></div>
<div class="t" style="left:1789px;top:743.16px;font-size:15px;color:#1a7df5">详情</div>
<div class="a" style="left:1741px;top:769.72px;width:127px;height:37.16px;background:#fff"></div>
<div class="a" style="left:1741px;top:805.88px;width:127px;height:1px;background:#e8ebf0"></div>
<div class="t" style="left:1789px;top:780.32px;font-size:15px;color:#1a7df5">详情</div>
<div class="a" style="left:1741px;top:806.88px;width:127px;height:37.16px;background:#f5f8fd"></div>
<div class="a" style="left:1741px;top:843.04px;width:127px;height:1px;background:#e8ebf0"></div>
<div class="t" style="left:1789px;top:817.48px;font-size:15px;color:#1a7df5">详情</div>
<div class="a" style="left:1741px;top:844.04px;width:127px;height:37.16px;background:#fff"></div>
<div class="a" style="left:1741px;top:880.20px;width:127px;height:1px;background:#e8ebf0"></div>
<div class="t" style="left:1789px;top:854.64px;font-size:15px;color:#1a7df5">详情</div>
<div class="a" style="left:1741px;top:881.20px;width:127px;height:37.16px;background:#f5f8fd"></div>
<div class="a" style="left:1741px;top:917.36px;width:127px;height:1px;background:#e8ebf0"></div>
<div class="t" style="left:1789px;top:891.80px;font-size:15px;color:#1a7df5">详情</div>
<div class="a" style="left:1868px;top:696px;width:3px;height:223px;background:#b5b5b5;border-radius:1px"></div>
<!-- /TABLE -->
</body></html>
